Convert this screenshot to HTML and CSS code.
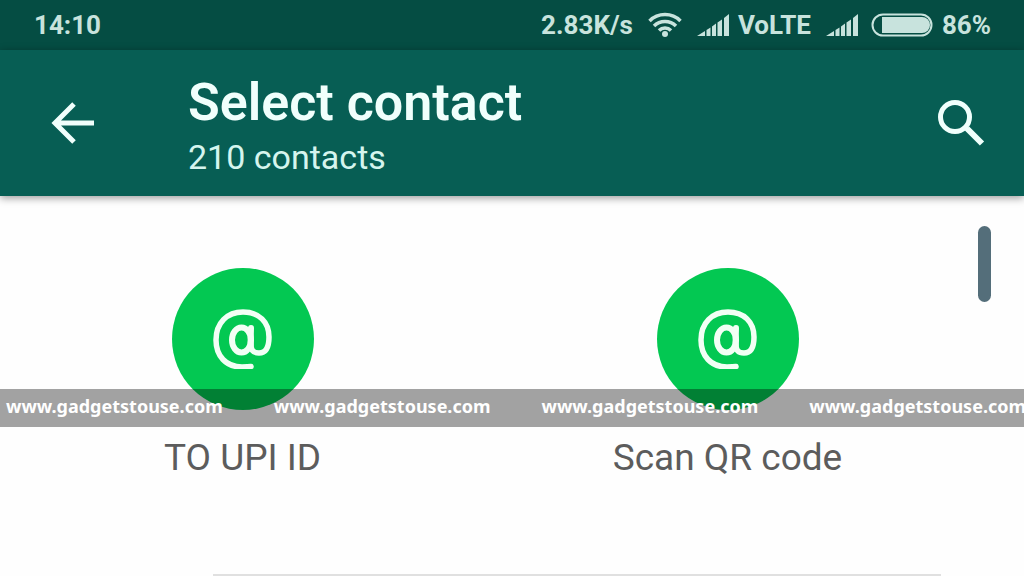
FILE: index.html
```
<!DOCTYPE html>
<html lang="en">
<head>
<meta charset="utf-8">
<meta name="viewport" content="width=device-width, initial-scale=1">
<title>Select contact</title>
<link rel="stylesheet" href="styles.css">
</head>
<body>
<svg class="sprite" width="0" height="0" aria-hidden="true">
  <symbol id="at" viewBox="0 0 60 60">
    <g fill="none" stroke="currentColor" stroke-linecap="round">
      <path stroke-width="5.500" d="M38 57.500C35 58 32 58 29 58C13 58 3 47 3 31C3 14 14 3 30 3C46 3 56 13 56 28C56 38 53 44 46 44C40 44 38 41 38 36"/>
      <path stroke-width="6" d="M38 19L37.500 37"/>
      <ellipse stroke-width="6" cx="28.500" cy="31" rx="9.500" ry="12.500"/>
    </g>
  </symbol>
  <symbol id="bars" viewBox="0 0 32 24">
    <path fill="currentColor" d="M0 23L8 18v5zM9.500 17l4-2.500v8.500h-4zM15 13.500l4-3v12.500h-4zM20.500 9.500l4.500-3v16.500h-4.500zM27 5l5-4v22h-5z"/>
  </symbol>
</svg>
<div class="status-bar">
  <time class="clock">14:10</time>
  <div class="indicators">
    <span>2.83K/s</span>
    <svg class="wifi" viewBox="0 0 34 26" width="34" height="26" fill="none" stroke="currentColor" stroke-width="3.500" aria-label="Wi-Fi">
      <path d="M1.500 9a22 22 0 0 1 31 0M6 14a15.500 15.500 0 0 1 22 0M11 18.500a8.500 8.500 0 0 1 12 0"/>
      <circle cx="17" cy="22" r="3" fill="currentColor" stroke="none"/>
    </svg>
    <svg width="32" height="24" aria-label="SIM 1 signal"><use href="#bars"/></svg>
    <span>VoLTE</span>
    <svg class="signal-second" width="32" height="24" aria-label="SIM 2 signal"><use href="#bars"/></svg>
    <svg viewBox="0 0 62 24" width="62" height="24" aria-label="Battery">
      <rect x="1.500" y="1.500" width="59" height="21" rx="10.500" fill="none" stroke="currentColor" stroke-width="2"/>
      <path d="M11 4h40a8 8 0 0 1 0 16H11z" fill="currentColor"/>
    </svg>
    <span>86%</span>
  </div>
</div>
<header class="app-bar">
  <button class="icon-button" type="button" aria-label="Back">
    <svg viewBox="0 0 44 44" width="44" height="44" fill="none" stroke="currentColor" stroke-width="5">
      <path d="M43 22H5M23 3L4 22l19 19"/>
    </svg>
  </button>
  <div class="heading">
    <h1 class="title">Select contact</h1>
    <p class="subtitle">210 contacts</p>
  </div>
  <button class="icon-button" type="button" aria-label="Search">
    <svg viewBox="0 0 48 48" width="48" height="48" fill="none" stroke="currentColor">
      <circle cx="17" cy="18" r="14.500" stroke-width="5"/>
      <path d="M27 28l3 3" stroke-width="4"/>
      <path d="M29 29.500L44 44.500" stroke-width="6"/>
    </svg>
  </button>
</header>
<main class="content">
  <div class="actions">
    <button class="action" type="button">
      <span class="action-icon"><svg width="60" height="60" aria-hidden="true"><use href="#at"/></svg></span>
      <span>TO UPI ID</span>
    </button>
    <button class="action" type="button">
      <span class="action-icon"><svg width="60" height="60" aria-hidden="true"><use href="#at"/></svg></span>
      <span>Scan QR code</span>
    </button>
  </div>
  <hr class="divider">
  <div class="scroll-thumb"></div>
  <div class="watermark">
    <span>www.gadgetstouse.com</span>
    <span>www.gadgetstouse.com</span>
    <span>www.gadgetstouse.com</span>
    <span>www.gadgetstouse.com</span>
  </div>
</main>
</body>
</html>
```
FILE: styles.css
```
* {
  box-sizing: border-box;
}

body {
  margin: 0;
  background: #fefefe;
  font-family: Roboto, "Noto Sans", sans-serif;
  overflow: hidden;
}

button {
  padding: 0;
  border: 0;
  background: none;
  color: inherit;
  font: inherit;
  cursor: pointer;
}

svg {
  display: block;
}

.sprite {
  position: absolute;
}

.status-bar {
  display: flex;
  align-items: center;
  justify-content: space-between;
  height: 50px;
  padding: 0 33px 0 34px;
  background: #054d43;
  color: #c8e3dd;
  font-size: 26px;
  font-weight: 700;
  line-height: 30px;
}

.indicators {
  display: flex;
  align-items: center;
  gap: 9px;
}

.wifi {
  margin: 0 6px;
}

.signal-second {
  margin: 0 4px 0 6px;
}

.app-bar {
  position: relative;
  display: flex;
  align-items: center;
  height: 146px;
  padding: 0 38px 0 51px;
  background: #075e54;
  box-shadow: 0 2px 8px rgba(0, 0, 0, 0.4);
  color: #f0fffc;
}

.heading {
  flex: 1;
  margin-left: 93px;
  padding-top: 8px;
}

.title {
  margin: 0;
  font-size: 52px;
  font-weight: 600;
  line-height: 60px;
}

.subtitle {
  margin: 0;
  color: #d5f5ee;
  font-size: 34px;
  line-height: 48px;
}

.content {
  position: relative;
  padding-top: 72px;
}

.actions {
  display: grid;
  grid-template-columns: 1fr 1fr;
  padding-right: 54px;
}

.action {
  display: flex;
  flex-direction: column;
  align-items: center;
  gap: 24px;
  color: #5c5c5c;
  font-size: 37px;
  line-height: 48px;
}

.action-icon {
  display: grid;
  place-items: center;
  width: 142px;
  height: 142px;
  border-radius: 50%;
  background: #03c852;
  color: #f2fff5;
}

.divider {
  height: 2px;
  margin: 92px 83px 0 213px;
  border: 0;
  background: #e0e0e0;
}

.scroll-thumb {
  position: absolute;
  top: 30px;
  right: 33px;
  width: 13px;
  height: 76px;
  border-radius: 7px;
  background: #546e7a;
}

.watermark {
  position: absolute;
  top: 193px;
  left: 0;
  right: 0;
  display: flex;
  gap: 51px;
  height: 38px;
  padding-left: 6px;
  overflow: hidden;
  background: rgba(0, 0, 0, 0.36);
  color: #fff;
  font-family: "Noto Sans", sans-serif;
  font-size: 18px;
  font-weight: 700;
  line-height: 34px;
  white-space: nowrap;
  pointer-events: none;
}
```
